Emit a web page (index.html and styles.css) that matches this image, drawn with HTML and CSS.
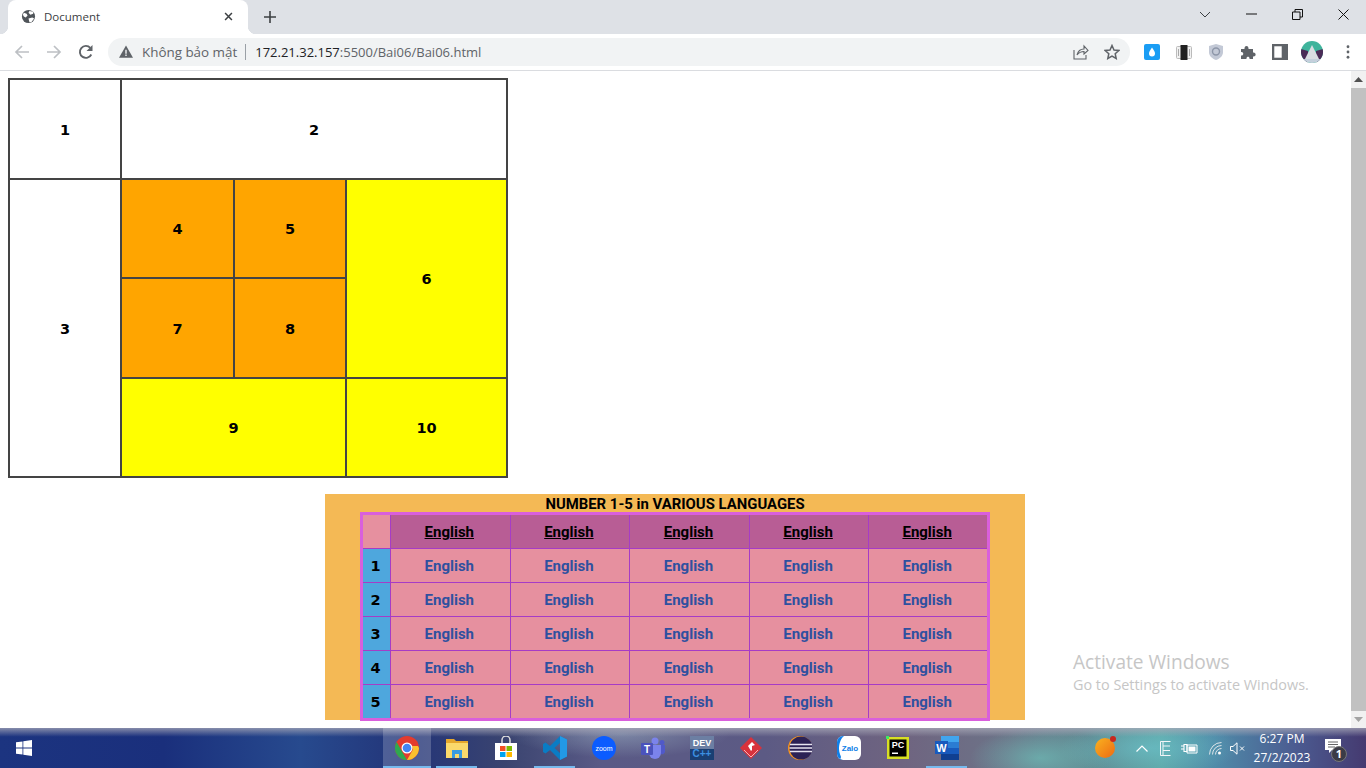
FILE: index.html
```html
<!DOCTYPE html>
<html lang="vi">
<head>
<meta charset="utf-8">
<title>Document</title>
<link rel="stylesheet" href="styles.css">
</head>
<body>
<header class="chrome">
  <div class="tabstrip">
    <div class="tab">
      <svg class="fav" viewBox="0 0 16 16"><circle cx="8" cy="8" r="7" fill="#50555a"/><path d="M3 4l3 1 1 2-2 2-2-1-1-2zM9 2l4 1 0 2-3 1-2-2zM8 10l4-1 2 1-3 4-2 0z" fill="#fff"/></svg>
      <span class="tabtitle">Document</span>
      <svg class="tabx" viewBox="0 0 10 10"><path d="M1.2 1.2l7.6 7.6M8.8 1.2l-7.6 7.6" stroke="#3c4043" stroke-width="1.7"/></svg>
    </div>
    <svg class="newtab" viewBox="0 0 12 12"><path d="M6 0v12M0 6h12" stroke="#3c4043" stroke-width="1.6"/></svg>
    <div class="winctl">
      <svg class="wc wc-chev" viewBox="0 0 12 8"><path d="M1 1l5 5 5-5" fill="none" stroke="#3c4043" stroke-width="1"/></svg>
      <svg class="wc wc-min" viewBox="0 0 11 2"><path d="M0 1h11" stroke="#111" stroke-width="1"/></svg>
      <svg class="wc wc-res" viewBox="0 0 11 11"><path d="M.5 3h7.5v7.5H.5zM3 3V.5h7.5V8H8" fill="none" stroke="#111" stroke-width="1"/></svg>
      <svg class="wc wc-close" viewBox="0 0 11 11"><path d="M.5.5l10 10M10.500.5l-10 10" stroke="#111" stroke-width="1"/></svg>
    </div>
  </div>
  <div class="toolbar">
    <svg class="nav" viewBox="0 0 16 16"><path d="M15 8H2M8 2L2 8l6 6" fill="none" stroke="#bdc0c4" stroke-width="1.7"/></svg>
    <svg class="nav" viewBox="0 0 16 16"><path d="M1 8h13M8 2l6 6-6 6" fill="none" stroke="#bdc0c4" stroke-width="1.7"/></svg>
    <svg class="nav" viewBox="0 0 16 16"><path d="M13.300 10.500A6 6 0 1 1 12.300 3.800" fill="none" stroke="#5f6368" stroke-width="1.900"/><path d="M14.500 1v6h-6z" fill="#5f6368"/></svg>
    <div class="omnibox">
      <svg class="warn" viewBox="0 0 16 14"><path d="M8 0l8 14H0z" fill="#5f6368"/><path d="M7.200 5h1.600v4.500H7.200zM7.200 10.500h1.600V12H7.200z" fill="#f1f3f4"/></svg>
      <span class="insecure">Không bảo mật</span>
      <span class="sep"></span>
      <span class="url"><b class="host">172.21.32.157</b>:5500/Bai06/Bai06.html</span>
      <svg class="omni-share" viewBox="0 0 16 16"><path d="M1 6v9h12v-4" fill="none" stroke="#5f6368" stroke-width="1.100"/><path d="M4 11c1-4 4-6 7-6V2l4 4.500L11 10V7.500C8 7.500 6 8.500 4 11z" fill="none" stroke="#5f6368" stroke-width="1.100"/></svg>
      <svg class="omni-star" viewBox="0 0 16 16"><path d="M8 1.500l2 4.500 4.800.5-3.600 3.200 1 4.800L8 12.100l-4.200 2.400 1-4.800L1.200 6.500 6 6z" fill="none" stroke="#5f6368" stroke-width="1.500"/></svg>
    </div>
    <div class="exts">
      <svg class="ext" viewBox="0 0 16 16"><rect width="16" height="16" rx="2" fill="#1a9df4"/><path d="M8 3.500c2 3 3 4.300 3 6a3 3 0 0 1-6 0c0-1.700 1-3 3-6z" fill="#fff"/></svg>
      <svg class="ext" viewBox="0 0 16 16"><rect x=".5" y="2.500" width="15" height="12" rx="1" fill="#f1f1f1" stroke="#bbb"/><rect x="4.500" y="1" width="7" height="15" fill="#222"/><path d="M2.500 5v7M13.500 5v7" stroke="#aaa"/></svg>
      <svg class="ext" viewBox="0 0 16 16"><path d="M8 0l7 2v6c0 4-3 6.500-7 8-4-1.500-7-4-7-8V2z" fill="#c3c9d6"/><circle cx="8" cy="7.500" r="3.500" fill="none" stroke="#8d96a8" stroke-width="1.400"/></svg>
      <svg class="ext" viewBox="0 0 16 16"><path d="M1 5h3.500c-.5-4 4.500-4 4 0H13v3.500c3.500-.5 3.500 4.500 0 4V15H9.500c.5-3-3.500-3-3 0H1v-3.500c3 .5 3-4 0-3.500z" fill="#5f6368"/></svg>
      <svg class="ext" viewBox="0 0 14 14"><path d="M0 0h14v14H0z" fill="#5f6368"/><path d="M2 2h6.500v10H2z" fill="#fff"/></svg>
      <svg class="avatar" viewBox="0 0 22 22"><clipPath id="avc"><circle cx="11" cy="11" r="11"/></clipPath><g clip-path="url(#avc)"><rect width="22" height="22" fill="#3fb49c"/><path d="M0 8l7 2v12H0zM22 8l-7 2v12h7z" fill="#4a2c57"/><path d="M11 4l7 14H4z" fill="#d9dde2"/><path d="M0 18h22v4H0z" fill="#c4d0dc"/></g></svg>
      <svg class="dots" viewBox="0 0 4 16"><circle cx="2" cy="2" r="1.600" fill="#5f6368"/><circle cx="2" cy="8" r="1.600" fill="#5f6368"/><circle cx="2" cy="14" r="1.600" fill="#5f6368"/></svg>
    </div>
  </div>
</header>

<div class="viewport">
  <main class="page">
    <table class="grid">
      <colgroup><col class="g1"><col class="g2"><col class="g3"><col class="g4"></colgroup>
      <tr class="gr"><td>1</td><td colspan="3">2</td></tr>
      <tr class="gr"><td rowspan="3">3</td><td class="or">4</td><td class="or">5</td><td class="ye" rowspan="2">6</td></tr>
      <tr class="gr"><td class="or">7</td><td class="or">8</td></tr>
      <tr class="gr"><td class="ye" colspan="2">9</td><td class="ye">10</td></tr>
    </table>

    <section class="lang">
      <div class="langtitle">NUMBER 1-5 in VARIOUS LANGUAGES</div>
      <table class="langtable">
        <colgroup><col class="l0"><col class="l1"><col class="l1"><col class="l1"><col class="l1"><col class="l1"></colgroup>
        <tr class="lh"><th class="corner"></th><th>English</th><th>English</th><th>English</th><th>English</th><th>English</th></tr>
        <tr><th class="num">1</th><td>English</td><td>English</td><td>English</td><td>English</td><td>English</td></tr>
        <tr><th class="num">2</th><td>English</td><td>English</td><td>English</td><td>English</td><td>English</td></tr>
        <tr><th class="num">3</th><td>English</td><td>English</td><td>English</td><td>English</td><td>English</td></tr>
        <tr><th class="num">4</th><td>English</td><td>English</td><td>English</td><td>English</td><td>English</td></tr>
        <tr class="lastrow"><th class="num">5</th><td>English</td><td>English</td><td>English</td><td>English</td><td>English</td></tr>
      </table>
    </section>
  </main>
  <div class="scrollbar">
    <svg class="sarrow" viewBox="0 0 9 5"><path d="M4.500 0L9 5H0z" fill="#505050"/></svg>
    <div class="thumb"></div>
    <svg class="sarrow" viewBox="0 0 9 5"><path d="M0 0h9L4.500 5z" fill="#a3a3a3"/></svg>
  </div>
  <div class="activate">
    <div class="act1">Activate Windows</div>
    <div class="act2">Go to Settings to activate Windows.</div>
  </div>
</div>

<footer class="taskbar">
  <div class="start"><svg class="winlogo" viewBox="0 0 16 16"><path d="M0 2.300l6.500-.9v6.200H0zM7.300 1.300L16 0v7.600H7.300zM0 8.400h6.500v6.200L0 13.700zM7.300 8.400H16V16l-8.700-1.300z" fill="#fff"/></svg></div>
  <div class="apps">
    <div class="app active on"><svg class="ai" viewBox="0 0 24 24"><circle cx="12" cy="12" r="12" fill="#e33b2e"/><path d="M12 24A12 12 0 0 1 1.600 6l6 10.500z" fill="#2fa84f"/><path d="M24 12a12 12 0 0 1-12 12l6-10.500-1-3.500H22.900z" fill="#fbc02d"/><circle cx="12" cy="12" r="5.500" fill="#fff"/><circle cx="12" cy="12" r="4.300" fill="#4285f4"/></svg></div>
    <div class="app on"><svg class="ai" viewBox="0 0 24 24"><path d="M1 3h8l2 2h12v17H1z" fill="#e6a82c"/><path d="M1 7h22v15H1z" fill="#fbd96b"/><path d="M7 14h10v8h-3v-4h-4v4H7z" fill="#3a9be0"/></svg></div>
    <div class="app"><svg class="ai" viewBox="0 0 24 24"><path d="M1 7h22v17H1z" fill="#fff"/><path d="M8 7V4a4 4 0 0 1 8 0v3" fill="none" stroke="#ddd" stroke-width="1.500"/><path d="M6 10h5.500v5H6z" fill="#f25022"/><path d="M12.500 10H18v5h-5.500z" fill="#7fba00"/><path d="M6 16h5.500v5H6z" fill="#00a4ef"/><path d="M12.500 16H18v5h-5.500z" fill="#ffb900"/></svg></div>
    <div class="app on"><svg class="ai" viewBox="0 0 24 24"><path d="M17 0l7 3.500v17L17 24 7 14l-4.500 3.500L0 16V8l2.500-1.500L7 10zM17 7l-5.500 5 5.500 5z" fill="#0a7cc4"/><path d="M17 0l7 3.500v17L17 24z" fill="#2299e6"/></svg></div>
    <div class="app"><svg class="ai" viewBox="0 0 24 24"><circle cx="12" cy="12" r="12" fill="#0b5cff"/><text class="zoomtxt" x="12" y="14.500">zoom</text></svg></div>
    <div class="app"><svg class="ai" viewBox="0 0 24 24"><circle cx="14" cy="5" r="3.500" fill="#7b83eb"/><circle cx="21" cy="6.500" r="2.500" fill="#5059c9"/><path d="M8 9h12v8a6 6 0 0 1-12 0z" fill="#7b83eb"/><path d="M20 9h4v7a3 3 0 0 1-4 2z" fill="#5059c9"/><rect x="0" y="7" width="12" height="12" rx="1" fill="#4b53bc"/><text class="teamstxt" x="6" y="16.500">T</text></svg></div>
    <div class="app"><svg class="ai" viewBox="0 0 24 24"><rect width="24" height="24" fill="#1a3f73"/><rect y="0" width="24" height="13" fill="#6c7fa3"/><text class="devtxt" x="12" y="10">DEV</text><text class="cpptxt" x="12" y="21">C++</text></svg></div>
    <div class="app"><svg class="ai" viewBox="0 0 24 24"><path d="M12 1l11 11-11 11L1 12z" fill="#d8323c"/><path d="M9 10l4-4 3 3-3 1v4l-1 1z" fill="#fff"/><path d="M5 14l7 7 7-7" fill="none" stroke="#f3b5b8" stroke-width="1"/></svg></div>
    <div class="app"><svg class="ai" viewBox="0 0 24 24"><circle cx="12" cy="12" r="12" fill="#f7941e"/><circle cx="13" cy="12" r="11.500" fill="#2c2255"/><path d="M2 8.500h22M1.500 12h23M2 15.500h22" stroke="#e6e3f0" stroke-width="1.300"/></svg></div>
    <div class="app"><svg class="ai" viewBox="0 0 24 24"><rect width="24" height="24" rx="6" fill="#fff"/><path d="M0 6a6 6 0 0 1 6-6h1C3 3 2 9 2 13c0 4 2 7 2 8l-1 3H6a6 6 0 0 1-6-6z" fill="#0f7fe8"/><text class="zalotxt" x="13" y="15">Zalo</text></svg></div>
    <div class="app"><svg class="ai" viewBox="0 0 24 24"><rect x="1" y="1" width="22" height="22" fill="#d7df23"/><rect x="3.500" y="3.500" width="17" height="17" fill="#000"/><text class="pctxt" x="12" y="12">PC</text><rect x="6" y="16.500" width="6" height="1.500" fill="#fff"/><rect x="0" y="0" width="3" height="3" fill="#3dea62"/></svg></div>
    <div class="app on"><svg class="ai" viewBox="0 0 24 24"><path d="M6 0h18v24H6z" fill="#2b7cd3"/><path d="M6 0h18v6H6z" fill="#41a5ee"/><path d="M6 12h18v6H6z" fill="#185abd"/><path d="M6 18h18v6H6z" fill="#103f91"/><rect y="5" width="13" height="13" fill="#185abd"/><text class="wtxt" x="6.500" y="15.500">W</text></svg></div>
  </div>
  <div class="tray">
    <span class="orb"><span class="orbdot"></span></span>
    <svg class="tr tr-chev" viewBox="0 0 12 7"><path d="M.5 6.500L6 1l5.500 5.500" fill="none" stroke="#fff" stroke-width="1.200"/></svg>
    <svg class="tr tr-e" viewBox="0 0 11 15"><path d="M.5.500h10M.5 14.500h10M.5.500v14M3 .5v14M3 5h7M3 9.500h7" fill="none" stroke="#f2f6f8" stroke-width="1"/></svg>
    <svg class="tr tr-batt" viewBox="0 0 17 11"><path d="M0 3h3M0 6h3M3 1.500h3v7H3z" fill="none" stroke="#fff" stroke-width="1.100"/><path d="M6 2h10v8H6z" fill="none" stroke="#fff"/><path d="M7.500 3.500h7v5h-7z" fill="#fff"/></svg>
    <svg class="tr tr-wifi" viewBox="0 0 13 13"><path d="M.5 12.500A12 12 0 0 1 12.500.5M3.500 12.500a9 9 0 0 1 9-9M6.500 12.500a6 6 0 0 1 6-6" fill="none" stroke="#dfe6ea" stroke-width="1"/><circle cx="10.500" cy="11" r="1.500" fill="#fff"/></svg>
    <svg class="tr tr-vol" viewBox="0 0 15 13"><path d="M.5 4.500h2.500L7 .8v11.400L3 8.500H.5z" fill="none" stroke="#fff"/><path d="M10 4.500l4 4M14 4.500l-4 4" stroke="#fff"/></svg>
    <div class="clock"><div>6:27 PM</div><div>27/2/2023</div></div>
    <div class="notif">
      <svg class="notif-ic" viewBox="0 0 16 15"><path d="M0 0h16v11H7l-3 3v-3H0z" fill="#fff"/><path d="M3 3h10M3 5.500h10M3 8h7" stroke="#666" stroke-width="1"/></svg>
      <span class="badge">1</span>
    </div>
  </div>
</footer>
</body>
</html>
```
FILE: styles.css
```css
* { box-sizing: border-box; }
html, body { margin: 0; padding: 0; }
body {
  width: 1366px; height: 768px; overflow: hidden;
  display: flex; flex-direction: column;
  font-family: "Open Sans", "Liberation Sans", sans-serif;
  background: #fff;
}
svg { display: block; flex: none; }

/* browser frame */
.chrome { flex: none; }
.tabstrip { height: 34px; background: #dee1e6; display: flex; align-items: center; position: relative; }
.tab {
  width: 240px; height: 34px; margin-left: 8px; background: #fff;
  border-radius: 8px 8px 0 0; display: flex; align-items: center;
  padding: 0 15px 2px 13px; position: relative;
}
.tab::before, .tab::after { content: ""; position: absolute; bottom: 0; width: 8px; height: 8px; }
.tab::before { left: -8px; background: radial-gradient(circle at 0 0, #dee1e6 8px, #fff 8.5px); }
.tab::after { right: -8px; background: radial-gradient(circle at 100% 0, #dee1e6 8px, #fff 8.5px); }
.fav { width: 15px; height: 15px; }
.tabtitle { font-size: 11.5px; color: #3c4043; margin-left: 8px; flex: 1; }
.tabx { width: 9px; height: 9px; }
.newtab { width: 12px; height: 12px; margin-left: 16px; }
.winctl { margin-left: auto; display: flex; align-items: center; height: 100%; padding-bottom: 6px; }
.wc-chev { width: 12px; height: 8px; margin-right: 35px; margin-top: 1px; }
.wc-min { width: 11px; height: 2px; margin-right: 35px; }
.wc-res { width: 11px; height: 11px; margin-right: 35px; }
.wc-close { width: 11px; height: 11px; margin-right: 17px; }

.toolbar { height: 37px; background: #fff; border-bottom: 1px solid #dadce0; display: flex; align-items: center; padding-bottom: 1px; }
.nav { width: 16px; height: 16px; margin-left: 16px; }
.toolbar .nav:first-child { margin-left: 14px; }
.omnibox {
  width: 1022px; height: 28px; margin-left: 14px; border-radius: 14px; background: #f1f3f4;
  display: flex; align-items: center; padding: 0 10px 0 11px;
}
.warn { width: 14px; height: 13px; }
.insecure { font-size: 13.400px; color: #5f6368; margin-left: 9px; white-space: nowrap; }
.sep { width: 1px; height: 16px; background: #9aa0a6; margin: 0 9px 0 8px; }
.url { font-size: 13px; color: #5f6368; white-space: nowrap; }
.host { font-weight: 400; color: #202124; }
.omni-share { width: 16px; height: 16px; margin-left: auto; }
.omni-star { width: 16px; height: 16px; margin-left: 15px; }
.exts { display: flex; align-items: center; margin-left: 14px; }
.ext { width: 16px; height: 16px; margin-right: 16px; }
.avatar { width: 22px; height: 22px; margin-left: -3px; margin-right: 13px; }
.dots { width: 4px; height: 14px; margin-left: 10px; }

/* page viewport */
.viewport { flex: 1; min-height: 0; display: flex; position: relative; overflow: hidden; }
.page { flex: 1; min-width: 0; padding: 7px 8px 7px 7px; overflow: hidden; background: #fff; }

.grid { width: 499px; height: 400px; margin-left: 1px; border-collapse: collapse; table-layout: fixed; font: 700 14.500px "DejaVu Sans", sans-serif; color: #000; text-align: center; }
.g1 { width: 112px; }
.g2 { width: 113px; }
.g3 { width: 112px; }
.g4 { width: 161px; }
.gr { height: 99.500px; }
.grid td { border: 2px solid #444; padding: 2px 0 0; }
.or { background: #ffa500; }
.ye { background: #ff0; }

.lang { width: 700px; margin: 16px auto 0; background: #f4b955; height: 226px; }
.langtitle { height: 18px; text-align: center; font: 700 14.900px/20px "Roboto", "Liberation Sans", sans-serif; color: #000; white-space: nowrap; }
.langtable {
  width: 630px; margin: 0 auto; border-collapse: collapse; table-layout: fixed;
  border: 3px solid #d95fdc; font: 700 15px "Roboto", "Liberation Sans", sans-serif; text-align: center;
}
.l0 { width: 29px; }
.langtable td, .langtable th { border: 1px solid #a63cc6; padding: 0 2px 0 0; height: 34px; }
.langtable td { background: #e6909f; color: #2f509f; }
.lh th { background: #b85d95; color: #000; text-decoration: underline; height: 35px; }
.lh th.corner { background: #e6909f; }
.lastrow td, .lastrow th { height: 35px; }
.num { background: #4ea7dd; color: #000; font: 700 14.500px "DejaVu Sans", sans-serif; }

.scrollbar { width: 15px; flex: none; background: #f1f1f1; display: flex; flex-direction: column; align-items: center; }
.sarrow { width: 9px; height: 5px; margin: 6px 0; }
.thumb { width: 15px; flex: 1; background: #c1c1c1; }

.activate { position: absolute; left: 1073px; top: 579px; color: #c6c6c6; }
.act1 { font-size: 19.100px; line-height: 24px; white-space: nowrap; }
.act2 { font-size: 14.400px; line-height: 21px; white-space: nowrap; }

/* taskbar */
.taskbar {
  flex: none; height: 40px; display: flex; align-items: stretch; position: relative;
  background:
    linear-gradient(180deg, rgba(170,170,185,.75), rgba(170,170,185,0) 22%),
    radial-gradient(ellipse 70px 30px at 1040px 30px, rgba(110,200,190,.6), transparent),
    radial-gradient(ellipse 90px 28px at 1150px 20px, rgba(110,200,210,.55), transparent),
    radial-gradient(ellipse 110px 24px at 620px 6px, rgba(150,170,190,.55), transparent),
    linear-gradient(90deg, #1c3480 0%, #1a2f7c 12%, #274a8e 22%, #233478 30%, #3a4470 37%, #5a5a86 44%, #5c5a84 56%, #6f6480 66%, #6c7488 74%, #5f8a92 80%, #5ea6a6 85%, #4f8aa8 89%, #4b5a90 95%, #453a70 100%);
}
.start { width: 48px; display: flex; align-items: center; justify-content: center; }
.winlogo { width: 16px; height: 16px; }
.apps { display: flex; margin-left: 335px; }
.app { width: 49px; display: flex; align-items: center; justify-content: center; position: relative; }
.app.active { width: 48px; margin-right: 1px; background: rgba(255,255,255,.2); }
.app.on::after { content: ""; position: absolute; bottom: 0; left: 4px; right: 4px; height: 2px; background: #76b9ed; }
.app.active::after { left: 0; right: 0; }
.ai { width: 24px; height: 24px; }
.zoomtxt, .teamstxt, .devtxt, .cpptxt, .zalotxt, .pctxt, .wtxt { text-anchor: middle; font-family: "Liberation Sans", sans-serif; font-weight: 700; }
.zoomtxt { font-size: 7px; fill: #fff; font-weight: 400; }
.teamstxt { font-size: 10px; fill: #fff; }
.devtxt { font-size: 9px; fill: #fff; }
.cpptxt { font-size: 10px; fill: #3c8fe0; }
.zalotxt { font-size: 8px; fill: #0f7fe8; }
.pctxt { font-size: 9px; fill: #fff; }
.wtxt { font-size: 11px; fill: #fff; }

.tray { margin-left: auto; display: flex; align-items: center; }
.orb { width: 20px; height: 20px; border-radius: 50%; background: linear-gradient(135deg, #f9b320, #ee6a12); position: relative; margin-right: 21px; }
.orbdot { position: absolute; width: 6px; height: 6px; border-radius: 50%; background: #c8281e; top: -2px; right: -1px; }
.tr-chev { width: 12px; height: 7px; margin-right: 12px; }
.tr-e { width: 11px; height: 15px; margin-right: 10px; }
.tr-batt { width: 17px; height: 11px; margin-right: 11px; }
.tr-wifi { width: 13px; height: 13px; margin-right: 8px; }
.tr-vol { width: 15px; height: 13px; margin-right: 8px; }
.clock { width: 58px; text-align: center; color: #fff; font-size: 12px; line-height: 19px; white-space: nowrap; }
.notif { width: 32px; height: 40px; margin-left: 6px; margin-right: 17px; position: relative; display: flex; align-items: center; justify-content: center; }
.notif-ic { width: 16px; height: 15px; margin-top: -3px; }
.badge {
  position: absolute; left: 14px; top: 18px; width: 16px; height: 16px; border-radius: 50%;
  background: #3b3b46; border: 1px solid #777; color: #fff; font-size: 11px; font-weight: 700; line-height: 14px; text-align: center;
}
```
